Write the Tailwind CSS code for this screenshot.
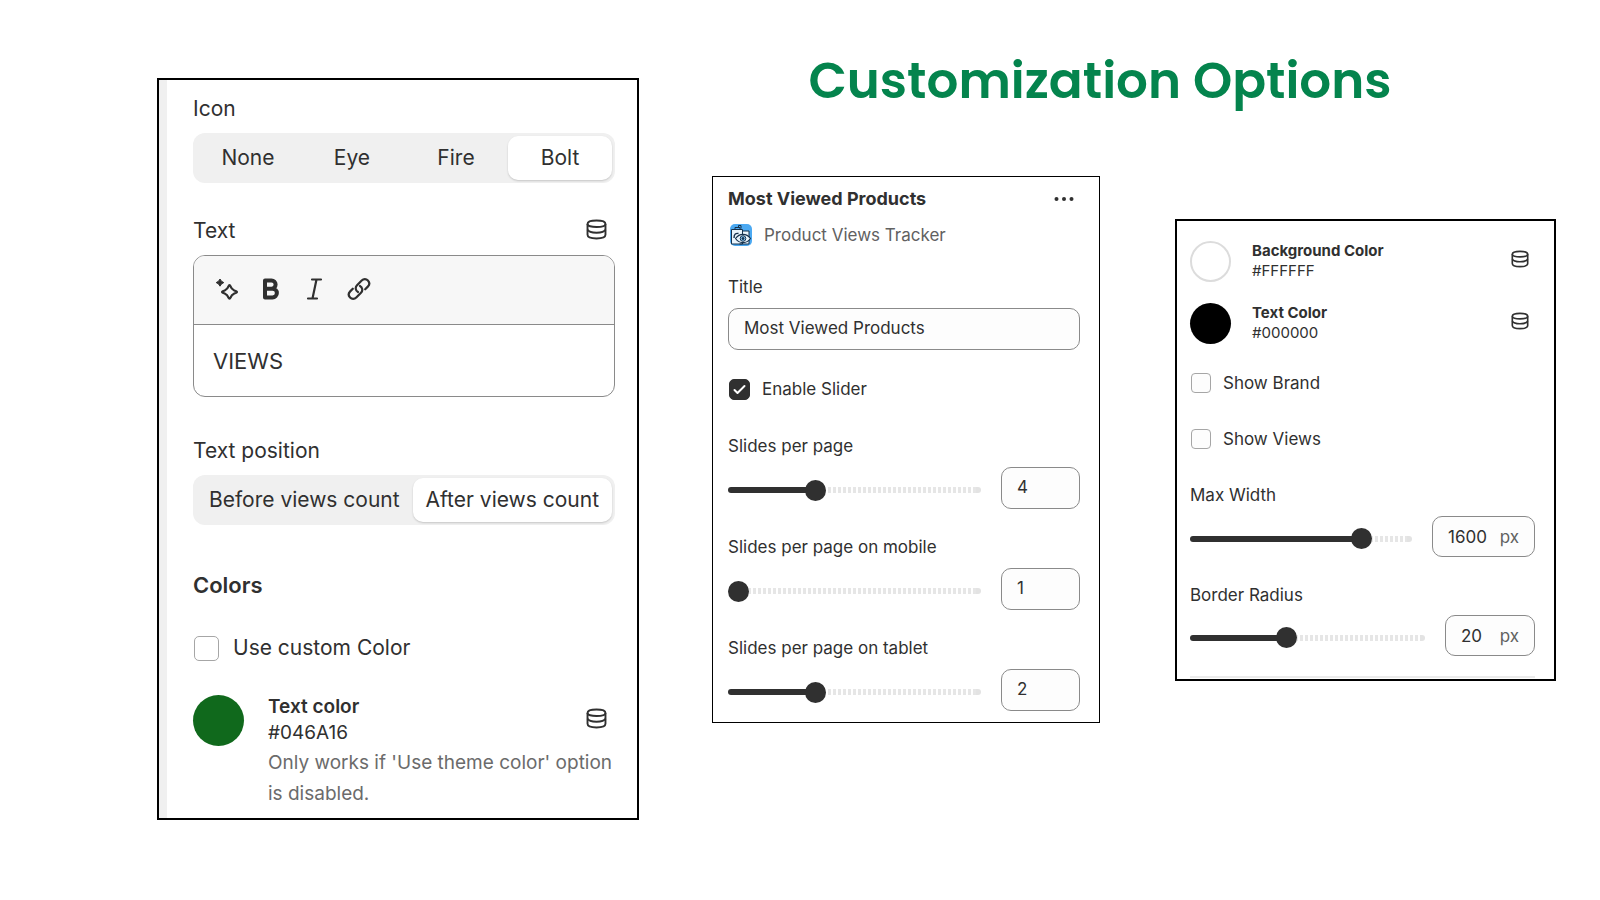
<!DOCTYPE html>
<html lang="en">
<head>
  <meta charset="UTF-8" />
  <meta name="viewport" content="width=device-width, initial-scale=1.0" />
  <title>Customization Options</title>
  <script src="https://cdn.jsdelivr.net/npm/@tailwindcss/browser@4"></script>
</head>
<body class="min-h-screen bg-white font-[Inter,'Liberation_Sans',sans-serif] text-[#303030]">
  <!-- Shared icons -->
  <svg class="hidden" aria-hidden="true">
    <symbol id="icon-database" viewBox="0 0 22 22">
      <g fill="none" stroke="currentColor" stroke-width="2">
        <path d="M1.600 5.200C1.600 3 5.600 1.600 11 1.600S20.400 3 20.400 5.200 16.400 8.400 11 8.400 1.600 7.400 1.600 5.200Z" />
        <path d="M1.600 5.200V16.600C1.600 19.200 5.600 20.400 11 20.400S20.400 19.200 20.400 16.600V5.200" />
        <path d="M1.600 11.200C2.600 13.400 6.500 14.400 11 14.400S19.400 13.400 20.400 11.200" />
      </g>
    </symbol>
  </svg>

  <main class="grid grid-cols-[482fr_844fr] items-start gap-[73px] pr-11 pl-[157px]">
    <!-- Badge settings -->
    <section class="mt-[78px] flex min-w-0 border-2 border-black">
      <div class="w-2 shrink-0 bg-[#f0f0f0]"></div>
      <div class="min-w-0 flex-1 pt-[15px] pr-[22px] pb-[9px] pl-[26px] text-[21px] leading-7">
        <p>Icon</p>
        <div class="mt-[10px] flex h-[50px] rounded-xl bg-[#f0f0f0] p-[3px]">
          <button class="flex-1">None</button>
          <button class="flex-1">Eye</button>
          <button class="flex-1">Fire</button>
          <button class="flex-1 rounded-[10px] bg-white shadow-[0_1px_2px_rgba(0,0,0,0.18)]">Bolt</button>
        </div>

        <div class="mt-[34px] flex items-start justify-between pr-2">
          <label for="badge-text">Text</label>
          <button class="pt-[2px]" aria-label="Connect dynamic source"><svg class="size-[21px]"><use href="#icon-database" /></svg></button>
        </div>
        <div class="mt-[10px] overflow-hidden rounded-xl border border-[#8a8a8a]">
          <div class="flex h-[69px] items-center border-b border-[#8a8a8a] bg-[#f7f7f7] px-[11px] pb-[2px]">
            <button class="flex w-11 justify-center" aria-label="Generate">
              <svg class="size-6" viewBox="0 0 24 24">
                <path d="M5 2l1.400 2.200L8.800 5.600 6.400 7 5 9.200 3.600 7 1.200 5.600 3.600 4.200Z" fill="currentColor" stroke="currentColor" stroke-linejoin="round" />
                <path d="M14.500 8.200c.5 0 .7.300.9.900.8 2.400 1.500 3.200 3.900 4.300l1.900.8c1 .4 1 1.100 0 1.500l-1.900.8c-2.400 1-3.100 1.900-3.900 4.300-.3 1-1.400 1-1.800 0-.8-2.400-1.500-3.300-3.900-4.300l-1.900-.8c-1-.4-1-1.100 0-1.500l1.900-.8c2.400-1.100 3.100-1.900 3.900-4.300.2-.6.500-.9.900-.9Z" fill="none" stroke="currentColor" stroke-width="2.200" stroke-linejoin="round" />
              </svg>
            </button>
            <button class="flex w-11 justify-center" aria-label="Bold">
              <svg class="size-6" viewBox="0 0 24 24" fill="none" stroke="currentColor" stroke-width="4" stroke-linejoin="round">
                <path d="M6 3.500h6.500a4 4 0 0 1 0 8.200H6zM6 11.700h7.500a4.200 4.200 0 0 1 0 8.800H6z" />
              </svg>
            </button>
            <button class="flex w-11 justify-center" aria-label="Italic">
              <svg class="size-6" viewBox="0 0 24 24" fill="none" stroke="currentColor" stroke-width="2.200" stroke-linecap="round">
                <path d="M9 2.500h9M5 21.500h9M13.500 2.500L9.500 21.500" />
              </svg>
            </button>
            <button class="flex w-11 justify-center" aria-label="Link">
              <svg class="size-6" viewBox="0 0 24 24" fill="none" stroke="currentColor" stroke-width="2.200" stroke-linecap="round">
                <path d="M11 15c-2.600-1.500-3-4.800-1-6.800l4.700-4.700c1.800-1.800 4.500-1.800 6.200 0s1.700 4.300-.1 6.100l-2.600 2.700" />
                <path d="M13 9c2.600 1.500 3 4.800 1 6.800l-4.700 4.700c-1.800 1.800-4.500 1.800-6.200 0s-1.700-4.300.1-6.100l2.600-2.700" />
              </svg>
            </button>
          </div>
          <textarea id="badge-text" rows="1" class="block h-[71px] w-full resize-none px-[19px] py-[22px] text-[22px] leading-7 outline-none">VIEWS</textarea>
        </div>

        <p class="mt-10">Text position</p>
        <div class="mt-[10px] flex h-[50px] rounded-xl bg-[#f0f0f0] p-[3px]">
          <button class="flex-auto whitespace-nowrap">Before views count</button>
          <button class="flex-auto rounded-[10px] bg-white whitespace-nowrap shadow-[0_1px_2px_rgba(0,0,0,0.18)]">After views count</button>
        </div>

        <h2 class="mt-[46px] text-[22px] font-semibold">Colors</h2>
        <label class="mt-[35px] flex items-center gap-[14px] pl-px">
          <input type="checkbox" class="size-[25px] appearance-none rounded-[5px] border border-[#a6a6a6] bg-white" />
          Use custom Color
        </label>
        <div class="mt-8 flex items-start pr-2 text-[19px]">
          <button class="mt-px size-[51px] shrink-0 rounded-full bg-[#10691c]" aria-label="Pick text color"></button>
          <div class="-mr-2 ml-[24px] flex-1">
            <h3 class="leading-[26px] font-semibold">Text color</h3>
            <p class="leading-[26px]">#046A16</p>
            <p class="mt-px leading-[31px] text-[#6b6b6b]">Only works if 'Use theme color' option is disabled.</p>
          </div>
          <button class="mt-[14px] -ml-[21px]" aria-label="Connect dynamic source"><svg class="size-[21px]"><use href="#icon-database" /></svg></button>
        </div>
      </div>
    </section>

    <div class="min-w-0">
      <h1 class="mt-[50px] pr-[68px] text-center font-[Poppins,Inter,sans-serif] text-[50px] leading-[62px] font-semibold whitespace-nowrap text-[#04844d]">Customization Options</h1>

      <div class="mt-16 grid grid-cols-[388fr_381fr] items-start gap-[75px]">
        <!-- Section settings -->
        <section class="min-w-0 border border-black pt-[10px] pr-[19px] pb-[11px] pl-[15px] text-[17px] leading-6">
          <div class="flex items-center justify-between pr-[6px]">
            <h2 class="text-[18px] font-bold">Most Viewed Products</h2>
            <button aria-label="More actions">
              <svg class="h-1 w-5" viewBox="0 0 20 4" fill="currentColor"><circle cx="2.500" cy="2" r="2" /><circle cx="10" cy="2" r="2" /><circle cx="17.500" cy="2" r="2" /></svg>
            </button>
          </div>
          <div class="mt-3 flex items-center gap-3 pl-[2px] text-[#616161]">
            <svg class="size-[22px]" viewBox="0 0 22 22">
              <rect width="22" height="22" rx="5" fill="#4ba9f2" />
              <g fill="#eaf5fd" stroke="#17324d" stroke-linejoin="round">
                <path d="M1.500 5.500h11v14.500h-11zM12.500 7h6.500v13H9.500" />
                <path d="M5 5.500V3.500h5v2M8.500 3.500V1.500h2.500v3" fill="none" />
                <path d="M4 14c0-4 2-5 4.500-4.500" fill="none" stroke-width="1.400" />
                <path d="M5.500 14.500c4-5.500 11-5.500 15 0-4 5.500-11 5.500-15 0Z" stroke-width="1.200" />
                <circle cx="13" cy="14.500" r="2.800" fill="#8ccaf7" />
                <circle cx="13" cy="14.500" r="1" fill="#17324d" />
              </g>
            </svg>
            <span>Product Views Tracker</span>
          </div>

          <label for="title" class="mt-7 block">Title</label>
          <input id="title" type="text" value="Most Viewed Products" class="mt-[9px] block h-[42px] w-full rounded-[10px] border border-[#8a8a8a] bg-[#fdfdfd] px-[15px] pb-[2px]" />

          <label class="mt-[27px] flex items-center gap-3 pl-px">
            <span class="grid size-[21px] place-items-center">
              <input type="checkbox" checked class="col-start-1 row-start-1 size-[21px] appearance-none rounded-[5px] border border-[#a6a6a6] checked:border-[#303030] checked:bg-[#303030]" />
              <svg class="pointer-events-none col-start-1 row-start-1 size-[13px]" viewBox="0 0 13 13" fill="none" stroke="#fff" stroke-width="2" stroke-linecap="round" stroke-linejoin="round"><path d="M1.500 7l3 3L11.500 3" /></svg>
            </span>
            Enable Slider
          </label>

          <label for="slides" class="mt-[33px] block">Slides per page</label>
          <div class="mt-[9px] flex items-center gap-5">
            <input id="slides" type="range" min="1" max="10" value="4" style="background-size: 33% 100%, 5px 100%, 100% 100%" class="mt-1 h-[6px] min-w-0 flex-1 appearance-none rounded-full bg-[linear-gradient(#303030,#303030),linear-gradient(#e3e3e3,#e3e3e3),repeating-linear-gradient(90deg,#e6e6e6_0_3px,transparent_3px_5px)] bg-[position:left,right,left] bg-no-repeat [&::-webkit-slider-thumb]:size-[21px] [&::-webkit-slider-thumb]:appearance-none [&::-webkit-slider-thumb]:rounded-full [&::-webkit-slider-thumb]:bg-[#303030]" />
            <input type="text" inputmode="numeric" value="4" aria-label="Slides per page" class="h-[42px] w-[79px] rounded-[10px] border border-[#8a8a8a] bg-[#fdfdfd] px-[15px] pb-[2px]" />
          </div>

          <label for="slides-mobile" class="mt-[26px] block">Slides per page on mobile</label>
          <div class="mt-[9px] flex items-center gap-5">
            <input id="slides-mobile" type="range" min="1" max="4" value="1" style="background-size: 0% 100%, 5px 100%, 100% 100%" class="mt-1 h-[6px] min-w-0 flex-1 appearance-none rounded-full bg-[linear-gradient(#303030,#303030),linear-gradient(#e3e3e3,#e3e3e3),repeating-linear-gradient(90deg,#e6e6e6_0_3px,transparent_3px_5px)] bg-[position:left,right,left] bg-no-repeat [&::-webkit-slider-thumb]:size-[21px] [&::-webkit-slider-thumb]:appearance-none [&::-webkit-slider-thumb]:rounded-full [&::-webkit-slider-thumb]:bg-[#303030]" />
            <input type="text" inputmode="numeric" value="1" aria-label="Slides per page on mobile" class="h-[42px] w-[79px] rounded-[10px] border border-[#8a8a8a] bg-[#fdfdfd] px-[15px] pb-[2px]" />
          </div>

          <label for="slides-tablet" class="mt-[26px] block">Slides per page on tablet</label>
          <div class="mt-[9px] flex items-center gap-5">
            <input id="slides-tablet" type="range" min="1" max="4" value="2" style="background-size: 33% 100%, 5px 100%, 100% 100%" class="mt-1 h-[6px] min-w-0 flex-1 appearance-none rounded-full bg-[linear-gradient(#303030,#303030),linear-gradient(#e3e3e3,#e3e3e3),repeating-linear-gradient(90deg,#e6e6e6_0_3px,transparent_3px_5px)] bg-[position:left,right,left] bg-no-repeat [&::-webkit-slider-thumb]:size-[21px] [&::-webkit-slider-thumb]:appearance-none [&::-webkit-slider-thumb]:rounded-full [&::-webkit-slider-thumb]:bg-[#303030]" />
            <input type="text" inputmode="numeric" value="2" aria-label="Slides per page on tablet" class="h-[42px] w-[79px] rounded-[10px] border border-[#8a8a8a] bg-[#fdfdfd] px-[15px] pb-[2px]" />
          </div>
        </section>

        <!-- Card settings -->
        <section class="mt-[43px] min-w-0 border-2 border-black pt-5 pr-[19px] pb-px pl-[13px] text-[17px] leading-6">
          <div class="flex items-start">
            <button class="size-[41px] shrink-0 rounded-full border-2 border-[#dcdcdc] bg-white" aria-label="Pick background color"></button>
            <div class="ml-[21px] flex-1 text-[15px] leading-5">
              <h3 class="font-bold">Background Color</h3>
              <p>#FFFFFF</p>
            </div>
            <button class="mt-[9px] mr-[6px]" aria-label="Connect dynamic source"><svg class="size-[18px]"><use href="#icon-database" /></svg></button>
          </div>
          <div class="mt-[21px] flex items-start">
            <button class="size-[41px] shrink-0 rounded-full bg-black" aria-label="Pick text color"></button>
            <div class="ml-[21px] flex-1 text-[15px] leading-5">
              <h3 class="font-bold">Text Color</h3>
              <p>#000000</p>
            </div>
            <button class="mt-[9px] mr-[6px]" aria-label="Connect dynamic source"><svg class="size-[18px]"><use href="#icon-database" /></svg></button>
          </div>

          <label class="mt-[27px] flex items-center gap-3 pl-px">
            <input type="checkbox" class="size-5 appearance-none rounded-[4px] border border-[#a6a6a6] bg-[#fdfdfd]" />
            Show Brand
          </label>
          <label class="mt-8 flex items-center gap-3 pl-px">
            <input type="checkbox" class="size-5 appearance-none rounded-[4px] border border-[#a6a6a6] bg-[#fdfdfd]" />
            Show Views
          </label>

          <label for="max-width" class="mt-8 block">Max Width</label>
          <div class="mt-[9px] flex items-center gap-5">
            <input id="max-width" type="range" min="0" max="2000" value="1600" style="background-size: 80% 100%, 5px 100%, 100% 100%" class="mt-1 h-[6px] min-w-0 flex-1 appearance-none rounded-full bg-[linear-gradient(#303030,#303030),linear-gradient(#e3e3e3,#e3e3e3),repeating-linear-gradient(90deg,#e6e6e6_0_3px,transparent_3px_5px)] bg-[position:left,right,left] bg-no-repeat [&::-webkit-slider-thumb]:size-[21px] [&::-webkit-slider-thumb]:appearance-none [&::-webkit-slider-thumb]:rounded-full [&::-webkit-slider-thumb]:bg-[#303030]" />
            <div class="flex h-[41px] w-[103px] items-center justify-between rounded-[10px] border border-[#8a8a8a] bg-[#fdfdfd] px-[15px]">
              <input type="text" inputmode="numeric" value="1600" aria-label="Max Width" class="w-11 bg-transparent" />
              <span class="text-[#616161]">px</span>
            </div>
          </div>

          <label for="border-radius" class="mt-[26px] block">Border Radius</label>
          <div class="mt-2 flex items-center gap-5">
            <input id="border-radius" type="range" min="0" max="50" value="20" style="background-size: 40% 100%, 5px 100%, 100% 100%" class="mt-1 h-[6px] min-w-0 flex-1 appearance-none rounded-full bg-[linear-gradient(#303030,#303030),linear-gradient(#e3e3e3,#e3e3e3),repeating-linear-gradient(90deg,#e6e6e6_0_3px,transparent_3px_5px)] bg-[position:left,right,left] bg-no-repeat [&::-webkit-slider-thumb]:size-[21px] [&::-webkit-slider-thumb]:appearance-none [&::-webkit-slider-thumb]:rounded-full [&::-webkit-slider-thumb]:bg-[#303030]" />
            <div class="flex h-[41px] w-[90px] items-center justify-between rounded-[10px] border border-[#8a8a8a] bg-[#fdfdfd] px-[15px]">
              <input type="text" inputmode="numeric" value="20" aria-label="Border Radius" class="w-8 bg-transparent" />
              <span class="text-[#616161]">px</span>
            </div>
          </div>
          <hr class="mt-5 border-t-2 border-[#ebebeb]" />
        </section>
      </div>
    </div>
  </main>
</body>
</html>
